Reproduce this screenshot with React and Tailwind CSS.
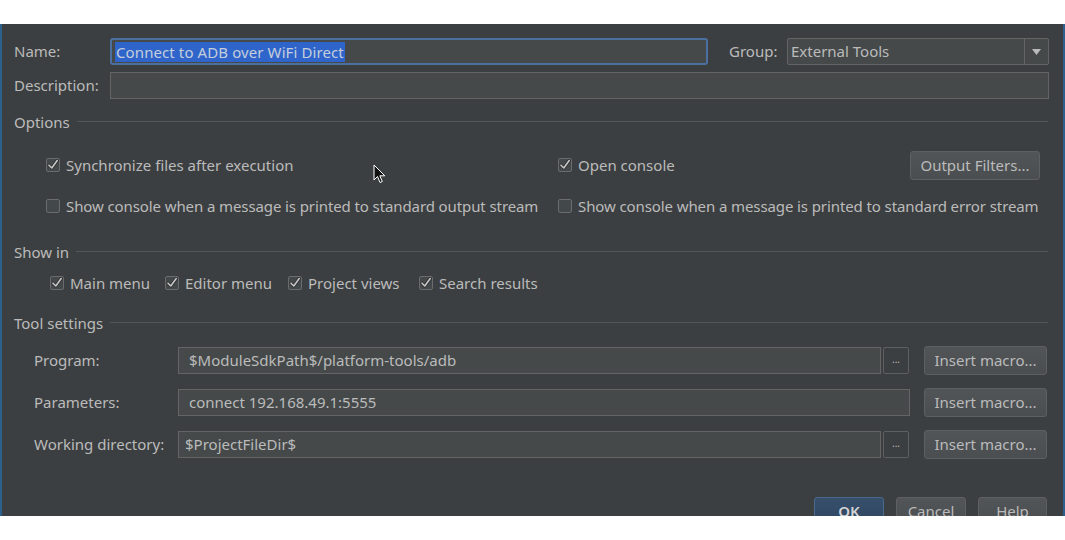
import { useState } from "react";

const font = { fontFamily: '"Noto Sans", "Open Sans", sans-serif' };

function Check({ checked }) {
  return (
    <span className="w-[14px] h-[14px] shrink-0 rounded-[2px] border border-[#6b6b6b] bg-[#43494a] flex items-center justify-center">
      {checked && (
        <svg width="12" height="12" viewBox="0 0 12 12">
          <path d="M2 6.2 L4.8 9 L10.2 1.5" fill="none" stroke="#2b2b2b" strokeWidth="3" strokeLinecap="round" strokeLinejoin="round" />
          <path d="M2 6.2 L4.8 9 L10.2 1.5" fill="none" stroke="#c8c8c8" strokeWidth="1.6" strokeLinecap="round" strokeLinejoin="round" />
        </svg>
      )}
    </span>
  );
}

function CheckItem({ checked, label, className = "", textClass = "" }) {
  return (
    <div className={`flex items-center gap-[6px] ${className}`}>
      <Check checked={checked} />
      <span className={`whitespace-nowrap ${textClass}`}>{label}</span>
    </div>
  );
}

function Section({ title }) {
  return (
    <div className="h-[20px] flex items-center pr-[15px]">
      <span className="whitespace-nowrap">{title}</span>
      <div className="flex-1 h-px bg-[#535658] ml-[7px] -translate-y-[1px]" />
    </div>
  );
}

function Button({ children, className = "" }) {
  return (
    <button className={`h-[29px] rounded-[3px] border border-[#5e6060] bg-gradient-to-b from-[#515557] to-[#4a4e50] text-[#bbbbbb] flex items-center justify-center whitespace-nowrap ${className}`}>
      {children}
    </button>
  );
}

function Field({ value, className = "", pad = "pl-[10px]" }) {
  return (
    <div className={`h-[27px] border border-[#646464] bg-[#45494a] flex items-center ${pad} ${className}`}>
      <span className="whitespace-nowrap">{value}</span>
    </div>
  );
}

function Browse() {
  return (
    <div className="w-[26px] h-[27px] ml-[2px] border border-[#5e6060] bg-[#3c3f41] rounded-[2px] flex items-center justify-center text-[10px] leading-none pb-[4px]">
      ...
    </div>
  );
}

export default function App() {
  const [name] = useState("Connect to ADB over WiFi Direct");

  return (
    <div className="w-[1065px] h-[540px] bg-white pt-[24px] text-[15px] text-[#bbbbbb]" style={font}>
      <div className="relative h-[492px] overflow-hidden bg-[#3c3f41] border-l-2 border-r-2 border-[#2d5f8c] pl-[12px]">
        {/* name + group */}
        <div className="mt-[14px] h-[27px] flex items-center">
          <span className="w-[96px]">Name:</span>
          <div className="w-[598px] h-[27px] rounded-[3px] border-2 border-[#4b70a0] bg-[#45494a] flex items-center pl-[3px]">
            <span className="bg-[#2f65ca] text-[#c5cedb] px-[1px] leading-[20px] whitespace-nowrap tracking-[0.1px]">{name}</span>
          </div>
          <span className="ml-[21px] w-[58px]">Group:</span>
          <div className="w-[262px] h-[27px] rounded-[2px] border border-[#646464] bg-[#45494a] flex items-center">
            <span className="flex-1 pl-[3px]">External Tools</span>
            <div className="w-[24px] h-full border-l border-[#646464] flex items-center justify-center">
              <svg width="9" height="6" viewBox="0 0 9 6">
                <path d="M0 0 H9 L4.5 6 Z" fill="#bbbbbb" />
              </svg>
            </div>
          </div>
        </div>

        {/* description */}
        <div className="mt-[7px] h-[27px] flex items-center">
          <span className="w-[96px]">Description:</span>
          <Field value="" className="w-[939px]" />
        </div>

        {/* options */}
        <div className="mt-[13px]">
          <Section title="Options" />
        </div>
        <div className="mt-[18px] h-[30px] flex items-center pl-[32px]">
          <CheckItem checked label="Synchronize files after execution" className="w-[512px]" />
          <CheckItem checked label="Open console" className="w-[352px]" />
          <Button className="w-[130px]">Output Filters...</Button>
        </div>
        <div className="mt-[16px] h-[20px] flex items-center pl-[32px]">
          <CheckItem label="Show console when a message is printed to standard output stream" className="w-[512px]" textClass="tracking-[-0.1px]" />
          <CheckItem label="Show console when a message is printed to standard error stream" textClass="tracking-[-0.1px]" />
        </div>

        {/* show in */}
        <div className="mt-[26px]">
          <Section title="Show in" />
        </div>
        <div className="mt-[11px] h-[20px] flex items-center pl-[36px]">
          <CheckItem checked label="Main menu" className="w-[115px]" />
          <CheckItem checked label="Editor menu" className="w-[123px]" />
          <CheckItem checked label="Project views" className="w-[131px]" />
          <CheckItem checked label="Search results" />
        </div>

        {/* tool settings */}
        <div className="mt-[20px]">
          <Section title="Tool settings" />
        </div>
        <div className="mt-[13px] h-[29px] flex items-center pl-[20px]">
          <span className="w-[144px]">Program:</span>
          <Field value="$ModuleSdkPath$/platform-tools/adb" className="w-[703px]" />
          <Browse />
          <Button className="ml-[15px] w-[123px]">Insert macro...</Button>
        </div>
        <div className="mt-[13px] h-[29px] flex items-center pl-[20px]">
          <span className="w-[144px]">Parameters:</span>
          <Field value="connect 192.168.49.1:5555" className="w-[732px]" />
          <Button className="ml-[14px] w-[123px]">Insert macro...</Button>
        </div>
        <div className="mt-[13px] h-[29px] flex items-center pl-[20px]">
          <span className="w-[144px]">Working directory:</span>
          <Field value="$ProjectFileDir$" className="w-[703px]" pad="pl-[6px]" />
          <Browse />
          <Button className="ml-[15px] w-[123px]">Insert macro...</Button>
        </div>

        {/* dialog buttons, cut off by the window edge as in the capture */}
        <div className="mt-[38px] flex items-start pl-[800px] gap-[12px]">
          <button className="w-[70px] h-[29px] rounded-[3px] border border-[#4a6a8d] bg-gradient-to-b from-[#384f6c] to-[#2f4663] text-[#d4d4d4] font-semibold">
            OK
          </button>
          <Button className="w-[70px]">Cancel</Button>
          <Button className="w-[69px]">Help</Button>
        </div>

        {/* mouse pointer */}
        <svg className="absolute left-[371px] top-[140px]" width="13" height="20" viewBox="0 0 13 20">
          <path d="M1 1 L1 16 L4.5 12.5 L7 18.5 L9.3 17.5 L6.8 11.8 L11.8 11.8 Z" fill="#111" stroke="#fff" strokeWidth="1" strokeLinejoin="round" />
        </svg>
      </div>
    </div>
  );
}
